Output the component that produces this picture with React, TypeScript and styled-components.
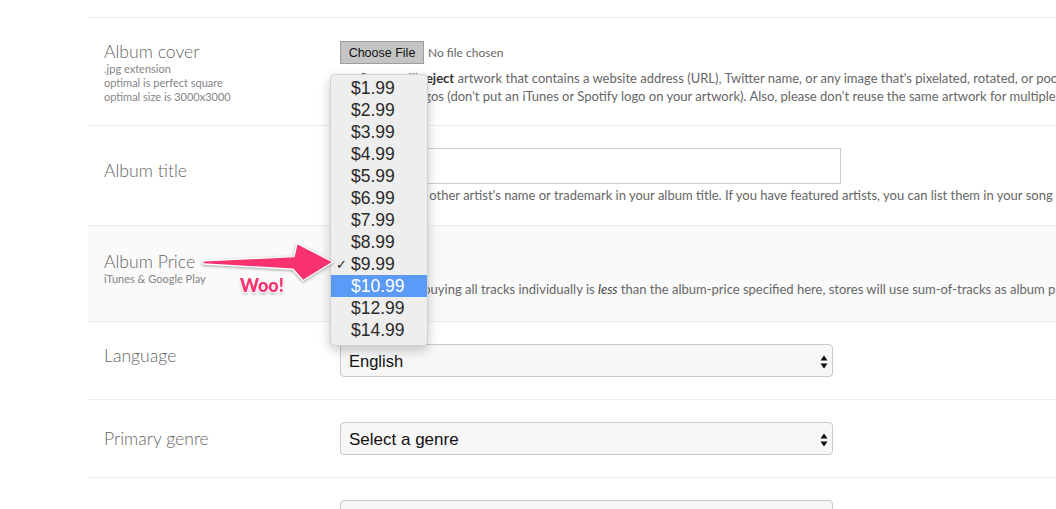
import React from "react";
import styled, { createGlobalStyle } from "styled-components";

const GlobalStyle = createGlobalStyle`
  html, body {
    margin: 0;
    padding: 0;
    background: #ffffff;
    overflow: hidden;
  }
  body {
    font-family: Lato, "Noto Sans", sans-serif;
  }
`;

const prices = [
  "$1.99",
  "$2.99",
  "$3.99",
  "$4.99",
  "$5.99",
  "$6.99",
  "$7.99",
  "$8.99",
  "$9.99",
  "$10.99",
  "$12.99",
  "$14.99",
];

const SelectArrows: React.FC = () => (
  <svg width="8" height="14" viewBox="0 0 8 14">
    <path d="M4 0.5 L7.5 5.5 L0.5 5.5 Z" fill="#111" />
    <path d="M4 13.5 L7.5 8.5 L0.5 8.5 Z" fill="#111" />
  </svg>
);

const Arrow: React.FC = () => (
  <ArrowSvg viewBox="195 238 145 50" width="145" height="50">
    <path
      d="M204,260.8 L294,256.6 L297,243.5 L333,262 L303,280.5 L293,269.2 L204,264 Q201,262.4 204,260.8 Z"
      fill="#f8316f"
      stroke="#ffffff"
      strokeWidth="1.4"
      strokeLinejoin="round"
    />
  </ArrowSvg>
);

const App: React.FC = () => {
  return (
    <Page>
      <GlobalStyle />
      <Form>
        <Row $top={23} $bottom={20}>
          <LabelCol $offset={0}>
            <Label>Album cover</Label>
            <Sub>.jpg extension</Sub>
            <Sub>optimal is perfect square</Sub>
            <Sub>optimal size is 3000x3000</Sub>
          </LabelCol>
          <Field>
            <FileRow>
              <FileButton>Choose File</FileButton>
              <NoFile>No file chosen</NoFile>
            </FileRow>
            <Help $gap={5}>
              <Line>
                <InfoDot>i</InfoDot>&nbsp; Stores will <b>reject</b> artwork that
                contains a website address (URL), Twitter name, or any image that's
                pixelated, rotated, or poor quality.
              </Line>
              <Line>
                Please avoid logos (don't put an iTunes or Spotify logo on your
                artwork). Also, please don't reuse the same artwork for multiple
                releases.
              </Line>
            </Help>
          </Field>
        </Row>

        <Row $top={22} $bottom={21}>
          <LabelCol $offset={12}>
            <Label>Album title</Label>
          </LabelCol>
          <Field>
            <TextInput />
            <Help $gap={2}>
              <Line>
                Do not use any other artist's name or trademark in your album
                title. If you have featured artists, you can list them in your song
                titles.
              </Line>
            </Help>
          </Field>
        </Row>

        <Row $top={22} $bottom={23} $shaded>
          <LabelCol $offset={3}>
            <Label>Album Price</Label>
            <Sub>iTunes &amp; Google Play</Sub>
          </LabelCol>
          <Field>
            <PriceSelect>
              <span>$9.99</span>
              <SelectArrows />
            </PriceSelect>
            <Help $gap={4}>
              <Line>
                Please note: if buying all tracks individually is <i>less</i> than
                the album-price specified here, stores will use sum-of-tracks as
                album price.
              </Line>
            </Help>
          </Field>
        </Row>

        <Row $top={22} $bottom={22}>
          <LabelCol $offset={1}>
            <Label>Language</Label>
          </LabelCol>
          <Field>
            <SelectBox $size={16.5}>
              <span>English</span>
              <SelectArrows />
            </SelectBox>
          </Field>
        </Row>

        <Row $top={22} $bottom={22}>
          <LabelCol $offset={6}>
            <Label>Primary genre</Label>
          </LabelCol>
          <Field>
            <SelectBox $size={17}>
              <span>Select a genre</span>
              <SelectArrows />
            </SelectBox>
          </Field>
        </Row>

        <Row $top={22} $bottom={22}>
          <LabelCol $offset={6}>
            <Label>Secondary genre</Label>
          </LabelCol>
          <Field>
            <SelectBox $size={17}>
              <span>Select a genre</span>
              <SelectArrows />
            </SelectBox>
          </Field>
        </Row>
      </Form>

      {/* open native price popup */}
      <Popup>
        {prices.map((p) => (
          <PopupItem key={p} $active={p === "$10.99"}>
            {p === "$9.99" && <Check>✓</Check>}
            {p}
          </PopupItem>
        ))}
      </Popup>

      <Arrow />
      <Woo>Woo!</Woo>
    </Page>
  );
};

const Page = styled.div`
  position: relative;
  padding: 17px 0 0 88px;
  width: 1300px;
  height: 509px;
  box-sizing: border-box;
`;

const Form = styled.div`
  border-top: 1px solid #e8eef2;
`;

const Row = styled.div<{ $top: number; $bottom: number; $shaded?: boolean }>`
  display: grid;
  grid-template-columns: 236px 1fr;
  padding: ${(p) => p.$top}px 0 ${(p) => p.$bottom}px 16px;
  border-bottom: 1px solid #e8eef2;
  background: ${(p) => (p.$shaded ? "#fafafa" : "#ffffff")};
`;

const LabelCol = styled.div<{ $offset: number }>`
  display: flex;
  flex-direction: column;
  padding-top: ${(p) => p.$offset}px;
`;

const Label = styled.div`
  font-size: 17.6px;
  font-weight: 300;
  line-height: 21px;
  color: #666666;
`;

const Sub = styled.div`
  font-size: 11px;
  line-height: 14px;
  color: #858585;
`;

const Field = styled.div`
  display: flex;
  flex-direction: column;
  align-items: flex-start;
`;

const FileRow = styled.div`
  display: flex;
  align-items: center;
  gap: 4px;
`;

const FileButton = styled.button`
  width: 84px;
  height: 23px;
  padding: 0;
  margin: 0;
  background: #c4c4c4;
  border: 1px solid #9d9d9d;
  border-radius: 0;
  font-family: "Liberation Sans", Arial, sans-serif;
  font-size: 12.5px;
  color: #111111;
`;

const NoFile = styled.span`
  font-size: 12px;
  color: #666666;
`;

const Help = styled.div<{ $gap: number }>`
  margin-top: ${(p) => p.$gap}px;
  font-size: 13px;
  line-height: 18px;
  color: #666666;

  b {
    color: #333333;
  }
  i {
    color: #444444;
  }
`;

const Line = styled.div`
  white-space: nowrap;
`;

const InfoDot = styled.span`
  display: inline-block;
  width: 11px;
  height: 11px;
  border: 1.5px solid #888;
  border-radius: 50%;
  font-size: 9px;
  line-height: 11px;
  text-align: center;
  vertical-align: -1px;
`;

const TextInput = styled.div`
  width: 501px;
  height: 36px;
  box-sizing: border-box;
  border: 1px solid #cccccc;
  background: #ffffff;
`;

const SelectBox = styled.div<{ $size: number }>`
  width: 493px;
  height: 33px;
  box-sizing: border-box;
  display: flex;
  align-items: center;
  justify-content: space-between;
  padding: 2px 4px 0 8px;
  border: 1px solid #c9c9c9;
  border-radius: 4px;
  background: #f7f7f7;
  font-family: "Liberation Sans", Arial, sans-serif;
  font-size: ${(p) => p.$size}px;
  color: #111111;
`;

const PriceSelect = styled.div`
  width: 80px;
  height: 28px;
  box-sizing: border-box;
  display: flex;
  align-items: center;
  justify-content: space-between;
  padding: 0 4px 0 8px;
  border: 1px solid #c9c9c9;
  border-radius: 4px;
  background: #f7f7f7;
  font-family: "Liberation Sans", Arial, sans-serif;
  font-size: 15px;
`;

const Popup = styled.div`
  position: absolute;
  left: 330px;
  top: 74px;
  width: 98px;
  box-sizing: border-box;
  padding: 2px 0 4px;
  background: #eeeeee;
  border: 1px solid rgba(0, 0, 0, 0.12);
  border-radius: 5px;
  box-shadow: 0 4px 12px rgba(0, 0, 0, 0.22);
`;

const PopupItem = styled.div<{ $active?: boolean }>`
  position: relative;
  height: 22px;
  line-height: 23px;
  padding-left: 20px;
  font-family: "Liberation Sans", Arial, sans-serif;
  font-size: 17.5px;
  color: ${(p) => (p.$active ? "#ffffff" : "#2a2a2a")};
  background: ${(p) => (p.$active ? "#5b9bf7" : "transparent")};
`;

const Check = styled.span`
  position: absolute;
  left: 5px;
  top: 0;
  font-size: 13px;
  color: #222222;
`;

const ArrowSvg = styled.svg`
  position: absolute;
  left: 195px;
  top: 238px;
  overflow: visible;
  filter: drop-shadow(0 1px 1.5px rgba(0, 0, 0, 0.35));
`;

const Woo = styled.div`
  position: absolute;
  left: 240px;
  top: 274px;
  font-family: Lato, "Noto Sans", sans-serif;
  font-weight: 900;
  font-size: 18px;
  color: #f8316f;
  text-shadow: -1px -1px 0 #fff, 1px -1px 0 #fff, -1px 1px 0 #fff,
    1px 1px 0 #fff, 0 2px 3px rgba(0, 0, 0, 0.35);
`;

export default App;
